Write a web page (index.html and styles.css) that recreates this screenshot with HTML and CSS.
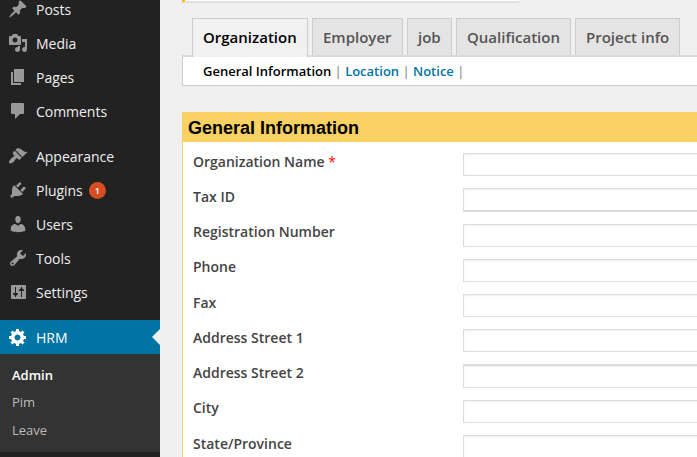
FILE: index.html
```
<!DOCTYPE html>
<html lang="en">
<head>
<meta charset="utf-8">
<title>HRM</title>
<link rel="stylesheet" href="styles.css">
</head>
<body>
<div class="app">
  <nav class="sidebar">
    <ul class="menu">
      <li class="item"><svg class="icon" viewBox="0 0 20 20"><path d="M10.44 3.02l1.82-1.82 6.36 6.35-1.83 1.82c-1.05-.68-2.48-.57-3.41.36l-.75.75c-.92.93-1.04 2.35-.35 3.41l-1.83 1.82-2.41-2.41-2.8 2.79c-.42.42-3.38 2.71-3.8 2.29s1.86-3.39 2.28-3.81l2.79-2.79L4.1 9.36l1.83-1.82c1.05.69 2.48.57 3.4-.36l.75-.75c.93-.92 1.05-2.35.36-3.41z"/></svg><span class="name">Posts</span></li>
      <li class="item"><svg class="icon" viewBox="0 0 20 20"><path d="M13 11V4c0-.55-.45-1-1-1h-1.67L9 1H5L3.67 3H2c-.55 0-1 .45-1 1v7c0 .55.45 1 1 1h10c.55 0 1-.45 1-1zM7 4.5c1.38 0 2.5 1.12 2.5 2.5S8.38 9.5 7 9.5 4.5 8.38 4.5 7 5.62 4.5 7 4.5zM14 6h5v10.5c0 1.38-1.12 2.5-2.5 2.5S14 17.88 14 16.5s1.12-2.5 2.5-2.5c.17 0 .34.02.5.05V9h-3V6zm-4 8.05V13h2v3.5c0 1.38-1.12 2.5-2.5 2.5S7 17.88 7 16.5 8.12 14 9.5 14c.17 0 .34.02.5.05z"/></svg><span class="name">Media</span></li>
      <li class="item"><svg class="icon" viewBox="0 0 20 20"><path d="M6 15V2h10v13H6zm-1 1h8v2H3V5h2v11z"/></svg><span class="name">Pages</span></li>
      <li class="item"><svg class="icon" viewBox="0 0 20 20"><path d="M4 2h11q1 0 1 1v9q0 1-1 1h-3l-5 5v-5H4q-1 0-1-1V3q0-1 1-1z"/></svg><span class="name">Comments</span></li>
      <li class="separator"></li>
      <li class="item"><svg class="icon" viewBox="0 0 20 20"><path d="M14.48 11.06L7.41 3.99l1.5-1.5c.5-.56 2.3-.47 3.51.32 1.21.8 1.43 1.28 2.91 2.1 1.18.64 2.45 1.26 4.45.85zm-.71.71L6.7 4.7 4.93 6.47c-.39.39-.39 1.02 0 1.41l1.06 1.06c.39.39.39 1.03 0 1.42-.6.6-1.43 1.11-2.21 1.69-.35.26-.7.53-1.01.84C1.43 14.23.4 16.08 1.4 17.07c.99 1 2.84-.03 4.18-1.36.31-.31.58-.66.85-1.02.57-.78 1.08-1.61 1.69-2.21.39-.39 1.02-.39 1.41 0l1.06 1.06c.39.39 1.02.39 1.41 0z"/></svg><span class="name">Appearance</span></li>
      <li class="item"><svg class="icon" viewBox="0 0 20 20"><path d="M13.11 4.36L9.87 7.6 8 5.73l3.24-3.24c.35-.34 1.05-.2 1.56.32.52.51.66 1.21.31 1.55zm-8 1.77l.91-1.12 9.01 9.01-1.19.84c-.71.71-2.63 1.16-3.82 1.16H6.14L4.9 17.26c-.59.59-1.54.59-2.12 0-.59-.58-.59-1.53 0-2.12l1.24-1.24v-3.88c0-1.13.4-3.19 1.09-3.89zm7.26 3.97l3.24-3.24c.34-.35 1.04-.21 1.55.31.52.51.66 1.21.31 1.55l-3.24 3.25z"/></svg><span class="name">Plugins</span><span class="count">1</span></li>
      <li class="item"><svg class="icon" viewBox="0 0 20 20"><path d="M10 9.25c-2.27 0-2.73-3.44-2.73-3.44C7 4.02 7.82 2 9.97 2c2.16 0 2.98 2.02 2.71 3.81 0 0-.41 3.44-2.68 3.44zm0 2.57L12.72 10c2.39 0 4.52 2.33 4.52 4.53v2.49s-3.65 1.13-7.24 1.13c-3.65 0-7.24-1.13-7.24-1.13v-2.49c0-2.25 1.94-4.48 4.47-4.48z"/></svg><span class="name">Users</span></li>
      <li class="item"><svg class="icon" viewBox="0 0 20 20"><path d="M16.68 9.77c-1.34 1.34-3.3 1.67-4.95.99l-5.41 6.52c-.99.99-2.59.99-3.58 0s-.99-2.59 0-3.57l6.52-5.42c-.68-1.65-.35-3.61.99-4.95 1.28-1.28 3.12-1.62 4.72-1.06l-2.89 2.89 2.82 2.82 2.86-2.87c.53 1.58.18 3.39-1.08 4.65zM3.81 16.21c.4.39 1.04.39 1.43 0 .4-.4.4-1.04 0-1.43-.39-.4-1.03-.4-1.43 0-.39.39-.39 1.03 0 1.43z"/></svg><span class="name">Tools</span></li>
      <li class="item"><svg class="icon" viewBox="0 0 20 20"><path fill-rule="evenodd" d="M4 3h13q1 0 1 1v12q0 1-1 1H4q-1 0-1-1V4q0-1 1-1zM7 5v6H5v1l2 2v1h1v-1l2-2v-1H8V5zM13 5v1l-2 2v1h2v6h1V9h2V8l-2-2V5z"/></svg><span class="name">Settings</span></li>
      <li class="separator"></li>
      <li class="item current"><svg class="icon" viewBox="0 0 20 20"><path d="M18 12h-2.18c-.17.7-.44 1.35-.81 1.93l1.54 1.54-2.1 2.1-1.54-1.54c-.58.36-1.23.63-1.91.79V19H8v-2.18c-.68-.16-1.33-.43-1.91-.79l-1.54 1.54-2.12-2.12 1.54-1.54c-.36-.58-.63-1.23-.79-1.91H1V9.03h2.17c.16-.7.44-1.35.8-1.94L2.43 5.55l2.1-2.1 1.54 1.54c.58-.37 1.24-.64 1.93-.81V2h3v2.18c.68.16 1.33.43 1.91.79l1.54-1.54 2.12 2.12-1.54 1.54c.36.59.64 1.24.8 1.94H18V12zm-8.5 1.5c1.66 0 3-1.34 3-3s-1.34-3-3-3-3 1.34-3 3 1.34 3 3 3z"/></svg><span class="name">HRM</span></li>
    </ul>
    <ul class="submenu">
      <li class="active">Admin</li>
      <li>Pim</li>
      <li>Leave</li>
    </ul>
  </nav>
  <main class="content">
    <div class="notice"></div>
    <div class="tabs">
      <a class="tab selected">Organization</a>
      <a class="tab employer">Employer</a>
      <a class="tab job">job</a>
      <a class="tab qualification">Qualification</a>
      <a class="tab project">Project info</a>
    </div>
    <div class="subtabs"><b>General Information</b> | <a>Location</a> | <a>Notice</a> |</div>
    <section class="panel">
      <h2>General Information</h2>
      <form class="fields">
        <div class="row"><label>Organization Name <em>*</em></label><input type="text"></div>
        <div class="row thick-bottom"><label>Tax ID</label><input type="text"></div>
        <div class="row raised"><label>Registration Number</label><input type="text"></div>
        <div class="row raised"><label>Phone</label><input type="text"></div>
        <div class="row"><label>Fax</label><input type="text"></div>
        <div class="row"><label>Address Street 1</label><input type="text"></div>
        <div class="row thick-top"><label>Address Street 2</label><input type="text"></div>
        <div class="row raised"><label>City</label><input type="text"></div>
        <div class="row"><label>State/Province</label><input type="text"></div>
      </form>
    </section>
  </main>
</div>
</body>
</html>
```
FILE: styles.css
```
* { box-sizing: border-box; }
body {
  margin: 0;
  background: #f0f0f0;
  font-family: "Open Sans", sans-serif;
  font-size: 14px;
  overflow: hidden;
}
.app { display: flex; height: 457px; overflow: hidden; }
ul { list-style: none; margin: 0; padding: 0; }

.sidebar { width: 160px; flex: none; background: #222; color: #eee; }
.menu { margin-top: -8px; }
.item {
  display: flex;
  align-items: center;
  height: 34px;
  padding-left: 8px;
  line-height: 18px;
}
.icon { width: 20px; height: 20px; margin-right: 8px; fill: #999; }
.name { padding-top: 2px; letter-spacing: -.03px; }
.separator { height: 11px; }
.count {
  width: 17px;
  height: 17px;
  margin: 1px 0 0 6px;
  border-radius: 50%;
  background: #d54e21;
  color: #fff;
  font-size: 9px;
  font-weight: 600;
  line-height: 17px;
  text-align: center;
}
.current { position: relative; background: #0074a2; color: #fff; }
.current .icon { fill: #fff; }
.current::after {
  content: "";
  position: absolute;
  right: 0;
  top: 9px;
  border: 8px solid transparent;
  border-left-width: 0;
  border-right-color: #f0f0f0;
}
.submenu {
  height: 98px;
  padding: 8px 12px;
  background: #333;
  color: #bbb;
  font-size: 13px;
}
.submenu li { height: 27.4px; line-height: 27px; }
.submenu .active { color: #fff; font-weight: 600; }

.content { width: 560px; flex: none; padding-left: 22px; }
.notice {
  width: 337px;
  height: 3px;
  border-left: 3px solid #ffba00;
  border-bottom: 2px solid #e2e2e2;
  background: #fff;
}
.tabs {
  display: flex;
  gap: 4px;
  height: 54px;
  padding: 15px 0 0 10px;
  border-bottom: 2px solid #dadada;
}
.tab {
  height: 37px;
  padding-left: 10px;
  border: 1px solid #ccc;
  border-bottom: 0;
  background: #e4e4e4;
  color: #555;
  font-size: 15px;
  font-weight: 600;
  line-height: 36px;
  white-space: nowrap;
}
.selected { width: 116px; height: 39px; background: #f1f1f1; color: #000; }
.employer { width: 91px; }
.job { width: 45px; }
.qualification { width: 115px; }
.project { width: 105px; }
.subtabs {
  height: 29px;
  padding-left: 20px;
  border-left: 1px solid #ccc;
  border-bottom: 1px solid #ccc;
  background: #fff;
  color: #777;
  font-size: 13px;
  line-height: 28px;
}
.subtabs b { color: #000; font-weight: 600; }
.subtabs a { color: #0074a2; font-weight: 600; }

.panel {
  height: 400px;
  margin-top: 26px;
  border-left: 1px solid #fad163;
  background: #fff;
}
.panel h2 {
  height: 30px;
  margin: 0 0 0 -1px;
  padding-left: 6px;
  background: #fad163;
  color: #000;
  font: bold 18px/33px "Liberation Sans", sans-serif;
}
.fields { padding: 11px 0 0 10px; }
.row { display: grid; grid-template-columns: 270px 1fr; height: 35px; }
.row label { color: #444; font-weight: 600; line-height: 18px; }
.raised label { line-height: 16px; }
.row em { color: #f00; font-style: normal; font-weight: 400; }
.row input {
  height: 23px;
  border: 1px solid #ddd;
  border-right: 0;
  background: #fff;
  box-shadow: inset 0 1px 2px rgba(0, 0, 0, .07);
  outline: 0;
}
.thick-bottom, .thick-top { height: 36px; }
.thick-bottom input { height: 24px; border-bottom-width: 2px; }
.thick-top input { height: 24px; border-top-width: 2px; }
```
